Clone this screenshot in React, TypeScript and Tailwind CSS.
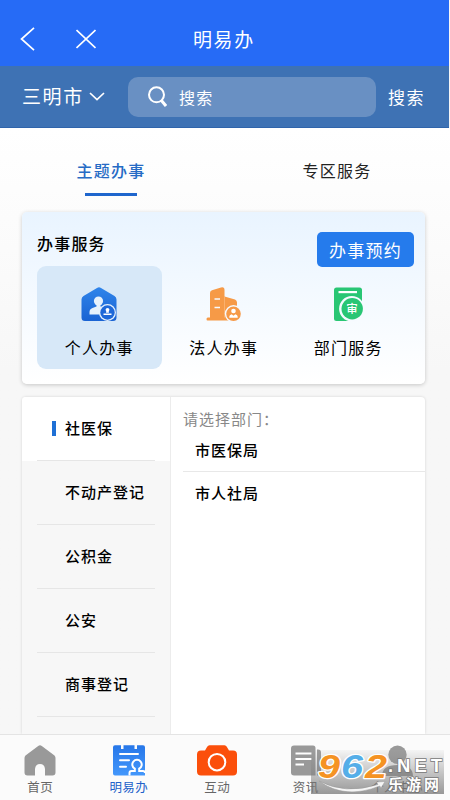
import type { ReactNode } from "react";

const departments = ["社医保", "不动产登记", "公积金", "公安", "商事登记"];
const offices = ["市医保局", "市人社局"];

function PersonalIcon() {
  return (
    <svg width="38" height="36" viewBox="0 0 38 36">
      <defs>
        <linearGradient id="house" x1="0" y1="0" x2="0" y2="1">
          <stop offset="0" stopColor="#2f84ea" />
          <stop offset="1" stopColor="#1a63d3" />
        </linearGradient>
      </defs>
      <path d="M17 .9Q19 -.2 21 .9L34.500 9Q36.500 10.200 36.500 12.500V30.500Q36.500 34 33 34H5Q1.500 34 1.500 30.500V12.500Q1.500 10.200 3.500 9Z" fill="url(#house)" />
      <circle cx="18.500" cy="14" r="4.600" fill="#e6f1fc" />
      <path d="M16.500 15h4v4.500l5 2v6H9.500v-2.500q0-3 3-4l4-1.500z" fill="#e6f1fc" />
      <circle cx="27.500" cy="25.500" r="8.500" fill="#e6f1fc" />
      <circle cx="27.500" cy="25.500" r="7.200" fill="#1e68d8" />
      <circle cx="27.500" cy="22.800" r="1.900" fill="#fff" />
      <path d="M26.500 23.500h2l.5 2.300h-3zM23.500 26.600h8v1.400h-8z" fill="#fff" />
    </svg>
  );
}

function CompanyIcon() {
  return (
    <svg width="38" height="36" viewBox="0 0 38 36">
      <path d="M5 30.500V6Q5 4 7 3.200L16 .4Q19.500 -.5 19.500 3V9.500L30 12.500Q32 13.500 32 15.500v18H2.500Q1.500 33.500 1.500 32t1.300-1.500z" fill="#f69a47" />
      <path d="M19.500 9.500v21" stroke="#fbb878" strokeWidth=".8" />
      <path d="M9.500 12h5.500M9.500 20.500h5.500" stroke="#f6faff" strokeWidth="1.700" />
      <circle cx="28.500" cy="26.800" r="8.700" fill="#f6faff" />
      <circle cx="28.500" cy="26.800" r="7.300" fill="#f69a47" />
      <circle cx="28.500" cy="24" r="2.300" fill="#fff" />
      <path d="M24.300 30.700v-1q0-2 2.300-2.500l1.900 1.600 1.900-1.600q2.300.5 2.300 2.500v1z" fill="#fff" />
    </svg>
  );
}

function OfficeIcon() {
  return (
    <svg width="38" height="36" viewBox="0 0 38 36">
      <path d="M7.500 .5h23q2.500 0 2.500 2.500v19l-10 12H7.500Q5 34 5 31.500V3Q5 .5 7.500 .5z" fill="#29c674" />
      <path d="M9.500 5.100h18.500" stroke="#fff" strokeWidth="2.200" />
      <circle cx="22.800" cy="21.700" r="12.700" fill="#f6faff" />
      <circle cx="23.200" cy="21.700" r="10.700" fill="#29c674" />
      <text x="23" y="26" textAnchor="middle" fontSize="11.500" fontWeight="500" fill="#fff">审</text>
    </svg>
  );
}

const services: { name: string; icon: ReactNode; active?: boolean }[] = [
  { name: "个人办事", icon: <PersonalIcon />, active: true },
  { name: "法人办事", icon: <CompanyIcon /> },
  { name: "部门服务", icon: <OfficeIcon /> },
];

function HomeIcon() {
  return (
    <svg width="34" height="32" viewBox="0 0 34 32">
      <path d="M15.200 1Q17 -.3 18.800 1L31.500 10.500Q32.500 11.500 32.500 13V27.500Q32.500 30.500 29.500 30.500H22v-6.500Q21.500 19 17 19T12 24v6.500H4.500Q1.500 30.500 1.500 27.500V13Q1.500 11.500 2.500 10.500Z" fill="#999" />
    </svg>
  );
}

function FormIcon() {
  return (
    <svg width="34" height="32" viewBox="0 0 34 32">
      <defs>
        <linearGradient id="form" x1="0" y1="0" x2="0" y2="1">
          <stop offset="0" stopColor="#2777e9" />
          <stop offset="1" stopColor="#4397fb" />
        </linearGradient>
      </defs>
      <path d="M3 .3H9V4h2.500V.3h11V4H25V.3h6q2 0 2 2V30.500H3q-2 0-2-2V2.300q0-2 2-2z" fill="url(#form)" />
      <path d="M8 9.100h18M8 15.300h9M8 21.700h6" stroke="#fff" strokeWidth="2" strokeLinecap="round" />
      <path d="M17.500 30.500v-2.500q0-2 2-2h3.300v-2.300a4.700 4.700 0 1 1 4.400 0V26H31q2 0 2 2" fill="none" stroke="#fff" strokeWidth="2" />
    </svg>
  );
}

function CameraIcon() {
  return (
    <svg width="42" height="32" viewBox="0 0 42 32">
      <path d="M13.500 .3h15q1.500 0 2.300 1.500L33 5.500h4q4 0 4 4v17q0 4-4 4H5q-4 0-4-4V9.500q0-4 4-4h4l2.200-3.700q.8-1.500 2.300-1.500z" fill="#fb4f0b" />
      <circle cx="21" cy="17.200" r="8.300" fill="none" stroke="#fff" strokeWidth="2" />
    </svg>
  );
}

function NewsIcon() {
  return (
    <svg width="34" height="32" viewBox="-1 0 34 32">
      <path d="M4 .5h19q2.500 0 2.500 2.500V30.500H4q-3 0-3-3V3.500q0-3 3-3z" fill="#999" />
      <path d="M27 4.500h1q3 0 3 3v19q0 4-3.500 4H27z" fill="#999" />
      <path d="M5.500 8.500h16M5.500 14h16M5.500 19.500H14" stroke="#fff" strokeWidth="2" />
    </svg>
  );
}

function UserIcon() {
  return (
    <svg width="34" height="32" viewBox="0 0 34 32">
      <circle cx="17.500" cy="9.800" r="9.200" fill="#999" />
      <path d="M2 31q0-11 15.500-11T33 31z" fill="#999" />
    </svg>
  );
}

const tabs = [
  { name: "首页", icon: <HomeIcon />, color: "text-[#666]" },
  { name: "明易办", icon: <FormIcon />, color: "text-[#2261c9]" },
  { name: "互动", icon: <CameraIcon />, color: "text-[#666]" },
  { name: "资讯", icon: <NewsIcon />, color: "text-[#666]" },
  { name: "个人中心", icon: <UserIcon />, color: "text-[#666]" },
];

function SiteBadge() {
  return (
    <div className="absolute top-[750px] left-[311px] h-[44px] w-[133px] bg-linear-to-b from-[#bbb]/10 to-[#777]/75">
      <svg className="overflow-visible" width="133" height="44" viewBox="0 0 133 44" fontFamily="Liberation Sans, Noto Sans CJK SC, sans-serif" fontWeight="700">
        <path d="M8 31Q34 45 67 34.500l-1.500-2.500 8.500-.5-4 6.500-1.200-2Q34 50 8 31z" fill="#f5f5f5" stroke="#999" strokeWidth=".5" />
        <g fontSize="33" fontStyle="italic" stroke="#fff" strokeWidth="2.500" paintOrder="stroke" strokeLinejoin="round">
          <text x="7" y="27.500" textLength="22" lengthAdjust="spacingAndGlyphs" fill="#f59323">9</text>
          <text x="30" y="27.500" textLength="22" lengthAdjust="spacingAndGlyphs" fill="#55aee8">6</text>
          <text x="54" y="27.500" textLength="22" lengthAdjust="spacingAndGlyphs" fill="#f59323">2</text>
        </g>
        <g fill="#fff" stroke="#777" strokeWidth="1.500" paintOrder="stroke">
          <text x="77" y="22" fontSize="18.500" textLength="54" lengthAdjust="spacing">.NET</text>
          <text x="77" y="39.500" fontSize="15" textLength="51">乐游网</text>
        </g>
      </svg>
    </div>
  );
}

export default function App() {
  return (
    <div className="relative flex h-[800px] w-[450px] flex-col overflow-hidden bg-[#f7f7f7] font-['Noto_Sans_CJK_SC',sans-serif] text-black">
      <header className="mr-px flex h-[66px] shrink-0 items-center bg-[#266bf6] pt-3 text-white">
        <div className="flex w-[193px] items-center gap-[41px] pl-5">
          <svg width="15" height="24" viewBox="0 0 15 24" fill="none" stroke="white" strokeWidth="1.700">
            <path d="M14 .8 1.500 12 14 23.200" />
          </svg>
          <svg width="20" height="20" viewBox="0 0 20 20" fill="none" stroke="white" strokeWidth="1.700">
            <path d="m.5 1 19 18M19.500 1 .5 19" />
          </svg>
        </div>
        <h1 className="text-[19px] leading-6 tracking-[1.600px]">明易办</h1>
      </header>

      <div className="mr-px flex h-[62px] shrink-0 items-center border-b border-[#2f64ab] bg-[#3e72b4] pl-[22px] text-white">
        <span className="w-[67px] text-[19px] tracking-[1.600px]">三明市</span>
        <svg width="16" height="9" viewBox="0 0 16 9" fill="none" stroke="white" strokeWidth="1.700">
          <path d="m1 1 7 6.500L15 1" />
        </svg>
        <div className="ml-[23px] flex h-10 w-[248px] items-center rounded-[10px] bg-[#6990c3] pl-5">
          <svg width="19" height="21" viewBox="0 0 19 21" fill="none" stroke="white">
            <circle cx="8.500" cy="8.800" r="7.500" strokeWidth="2" />
            <path d="m13 14 5 6" strokeWidth="3" />
          </svg>
          <span className="ml-3 text-[16px] tracking-[1.200px]">搜索</span>
        </div>
        <span className="ml-3 text-[17px] tracking-[1.400px]">搜索</span>
      </div>

      <main className="flex h-[606px] shrink-0 flex-col bg-linear-to-b from-white to-[#f7f7f7] to-40% px-[22px]">
        <div className="-mx-[22px] flex h-[84px] shrink-0 text-[16px] tracking-[1.200px]">
          <div className="flex w-[222px] shrink-0 flex-col items-center pt-[30px] font-medium text-[#266bc5]">
            <span className="leading-6">主题办事</span>
            <span className="mt-[11px] h-[2.500px] w-[52px] bg-[#1f66cd]" />
          </div>
          <div className="flex flex-1 flex-col items-center pt-[30px] pl-[2px] text-[#222]">
            <span className="leading-6">专区服务</span>
          </div>
        </div>

        <section className="h-[172px] w-[403px] shrink-0 rounded-[5px] bg-linear-to-b from-[#e9f4ff] to-white px-[15px] shadow-[0_1px_4px_rgba(0,0,0,0.2)]">
          <div className="flex h-[54px] justify-between">
            <h2 className="pt-[19px] text-[16px] leading-6 font-medium tracking-[1.200px]">办事服务</h2>
            <button className="mt-[20px] -mr-[4px] h-[35px] w-[97px] shrink-0 rounded-[5px] bg-[#257bec] text-[17px] tracking-[1.200px] text-white">
              办事预约
            </button>
          </div>
          <div className="flex">
            {services.map((s) => (
              <div
                key={s.name}
                className={`flex h-[103px] w-[124.500px] shrink-0 flex-col items-center rounded-[9px] pt-[21px] ${s.active ? "bg-[#d7e8f8]" : ""}`}
              >
                {s.icon}
                <span className="mt-3 text-[16px] leading-6 tracking-[1.200px]">{s.name}</span>
              </div>
            ))}
          </div>
        </section>

        <section className="mt-[13px] flex h-[337px] w-[403px] shrink-0 overflow-hidden rounded-t-[4px] bg-white shadow-[0_0_3px_rgba(0,0,0,0.15)]">
          <ul className="w-[149px] shrink-0 border-r border-[#ececec] bg-[#f7f7f7]">
            {departments.map((name, i) => (
              <li key={name} className={`flex h-16 flex-col px-[15px] ${i === 0 ? "bg-white" : ""}`}>
                <div className="flex flex-1 items-center border-b border-[#e6e6e6] pl-[15px]">
                  <span className={`h-[15px] w-1 ${i === 0 ? "bg-[#1f70d5]" : ""}`} />
                  <span className="ml-[9px] text-[15px] font-medium tracking-[1px] whitespace-nowrap">{name}</span>
                </div>
              </li>
            ))}
          </ul>
          <div className="flex-1 pl-3">
            <p className="h-[32px] pt-[10px] text-[15px] leading-6 tracking-[1px] text-[#888]">请选择部门：</p>
            {offices.map((name, i) => (
              <div
                key={name}
                className={`flex h-[43px] items-center pl-3 text-[15px] font-medium tracking-[1px] ${i === 0 ? "border-b border-[#e8e8e8]" : ""}`}
              >
                {name}
              </div>
            ))}
          </div>
        </section>
      </main>

      <nav className="flex h-[67px] shrink-0 border-t border-[#e4e4e4] bg-[#fbfbfb]">
        <div className="-ml-[4px] flex">
          {tabs.map((t) => (
            <div key={t.name} className={`flex w-[88.500px] shrink-0 flex-col items-center pt-[10px] last:w-[94px] ${t.color}`}>
              {t.icon}
              <span className="text-[12.500px] leading-5 tracking-[.4px]">{t.name}</span>
            </div>
          ))}
        </div>
      </nav>

      <SiteBadge />
    </div>
  );
}
